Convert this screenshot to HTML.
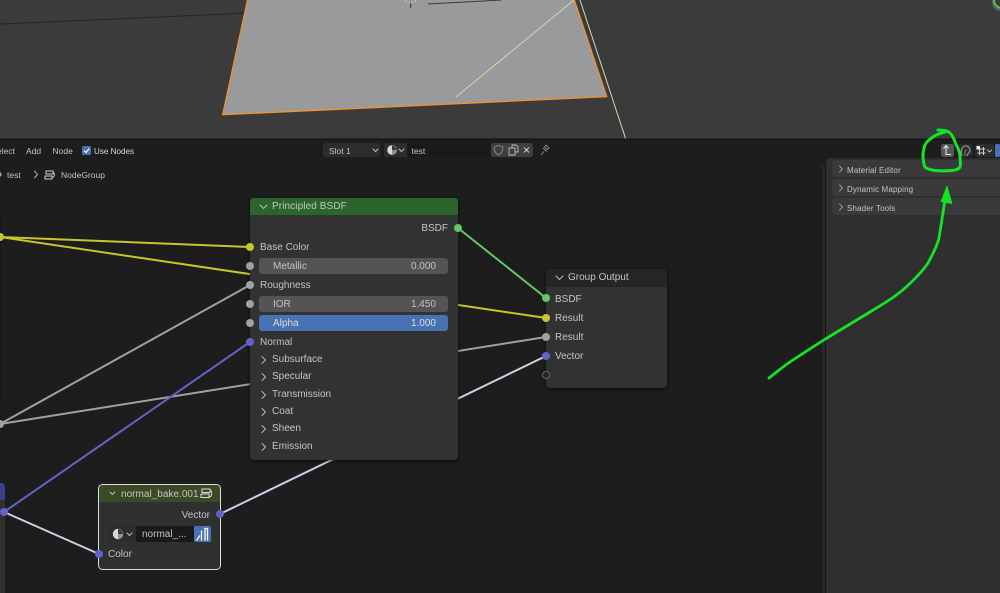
<!DOCTYPE html>
<html>
<head>
<meta charset="utf-8">
<style>
html,body{margin:0;padding:0;background:#1d1d1d;overflow:hidden}
svg{display:block;position:absolute;left:0;top:0;filter:blur(.35px)}
text{font-family:"Liberation Sans",sans-serif;font-size:10px;fill:#c4c4c4}
.w{fill:#dcdcdc}
.chev{fill:none;stroke:#bdbdbd;stroke-width:1;stroke-linecap:round;stroke-linejoin:round}
</style>
</head>
<body>
<svg width="1000" height="593" viewBox="0 0 1000 593" xmlns="http://www.w3.org/2000/svg">
<defs>
<filter id="sh" x="-10%" y="-10%" width="120%" height="120%"><feDropShadow dx="0" dy="1" stdDeviation="2" flood-color="#000" flood-opacity=".6"/></filter>
</defs>
<!-- viewport -->
<rect x="0" y="0" width="1000" height="139" fill="#3b3b3b"/>
<polygon points="247.7,-1 222.7,114.7 606.7,96.7 574,-1" fill="#989a9b" stroke="#f0932b" stroke-width="1.300"/>
<line x1="456" y1="97" x2="574" y2="0" stroke="#d6d8ae" stroke-width="1"/>
<line x1="580" y1="0" x2="625.7" y2="139" stroke="#d6d8ae" stroke-width="1"/>
<line x1="0" y1="24" x2="244" y2="13.300" stroke="#242424" stroke-width="1"/>
<line x1="427.7" y1="4" x2="501.7" y2="0" stroke="#3a3a3a" stroke-width="1"/>
<path d="M405 0a6 5 0 0 0 11 0" fill="none" stroke="#e8b4b4" stroke-width="1.100" stroke-dasharray="2 1.500"/>
<line x1="410.700" y1="3" x2="410.700" y2="8" stroke="#333" stroke-width="1"/>
<circle cx="1001" cy="2" r="8" fill="none" stroke="#3d6a9c" stroke-width="2"/>
<circle cx="1002" cy="0" r="8" fill="none" stroke="#7ab52a" stroke-width="2"/>

<!-- editor -->
<rect x="0" y="139" width="1000" height="454" fill="#1d1d1d"/>
<rect x="0" y="138.500" width="1000" height="1.500" fill="#141414"/>

<!-- header menus -->
<text x="15" y="154" text-anchor="end" style="font-size:8.500px">Select</text>
<text x="26" y="154" style="font-size:8.500px">Add</text>
<text x="52.500" y="154" style="font-size:8.500px">Node</text>
<rect x="82" y="146" width="9" height="9" rx="1.500" fill="#4772b3"/>
<path d="M84 150.500l2 2 3.200-4" fill="none" stroke="#fff" stroke-width="1.200"/>
<text x="94" y="154" style="font-size:8.100px" class="w">Use Nodes</text>

<rect x="323" y="143" width="57" height="14" rx="3" fill="#2d2d2d"/>
<text x="329" y="154" style="font-size:8.500px">Slot 1</text>
<path class="chev" d="M373 149l2.500 2.500 2.500-2.500"/>
<rect x="384" y="143" width="149" height="14" rx="3" fill="#2d2d2d"/>
<rect x="407" y="143" width="84" height="14" fill="#1a1a1a"/>
<rect x="491" y="143" width="42" height="14" rx="3" fill="#3f3f3f"/>
<circle cx="392" cy="150" r="4.800" fill="#d8d8d8"/>
<path d="M392 150V145.500a4.500 4.500 0 0 1 4.500 4.500z" fill="#3a3a3a"/>
<path d="M392 150h4.500a4.500 4.500 0 0 1-4.500 4.500z" fill="#8f8f8f"/>
<path class="chev" d="M399 149l2.500 2.500 2.500-2.500"/>
<text x="411.500" y="154" style="font-size:8.500px">test</text>
<path d="M494 147l4.500-1.500 4.500 1.500c0 4-1.500 6.500-4.500 8-3-1.500-4.500-4-4.500-8z" fill="none" stroke="#8f8f8f" stroke-width=".9"/>
<path d="M509 148h6v7h-6zM512 148v-3h4l2 2v5h-3" fill="none" stroke="#bbb" stroke-width=".9"/>
<path d="M524 147.500l5 5M529 147.500l-5 5" stroke="#ccc" stroke-width="1"/>
<path d="M541 155l3-3.500M543 148l3.500 3.500M546 145l3 3-2 1.500-2.500-2.500z" fill="none" stroke="#8c8c8c" stroke-width=".9"/>

<!-- right header -->
<rect x="941" y="144" width="13" height="13" rx="2.500" fill="#565656"/>
<path d="M943.500 148.500l2.500-3 2.500 3M946 146v8.500h5" fill="none" stroke="#e6e6e6" stroke-width="1.100"/>
<rect x="959" y="144" width="14" height="13" rx="3" fill="#2a2a2a"/>
<path d="M962 156c-1.500-4-.5-10 3.500-10s5 4 4 6-2 1-2.500 4" fill="none" stroke="#7c7c7c" stroke-width="1.600"/>
<path d="M965 156c-.5-3 0-6 1.500-6" fill="none" stroke="#7c7c7c" stroke-width="1"/>
<rect x="975" y="144" width="19" height="13" rx="2.500" fill="#2d2d2d"/>
<path d="M977.500 149h8M977.500 153h8M979.500 147v8M983.500 147v8" stroke="#ccc" stroke-width="1"/>
<rect x="976.500" y="146" width="3.500" height="3.500" fill="#eee"/>
<path class="chev" d="M987.500 150l2 2 2-2"/>
<rect x="995" y="144" width="5" height="13" rx="1.500" fill="#4772b3"/>

<!-- breadcrumbs -->
<circle cx="-1" cy="174.500" r="2.500" fill="#aaa"/>
<text x="7" y="178" style="font-size:8.500px">test</text>
<path class="chev" d="M34.500 171l3 3.500-3 3.500" style="stroke:#aaa"/>
<path d="M46 171h7v3h-7zM45 176h7v3h-7zM53 172.500c2 0 2 4.500-1 5" fill="none" stroke="#ccc" stroke-width="1"/>
<text x="61" y="178" style="font-size:8.500px">NodeGroup</text>

<!-- sidebar -->
<rect x="822" y="166" width="3" height="427" fill="#292929"/>
<rect x="825" y="158" width="1.500" height="435" fill="#161616"/>
<path d="M830 158H1000V593H826V162a4 4 0 0 1 4-4z" fill="#2f2f2f"/>
<rect x="832" y="160" width="170" height="17" rx="3" fill="#3a3a3a"/>
<rect x="832" y="179" width="170" height="17" rx="3" fill="#3a3a3a"/>
<rect x="832" y="198" width="170" height="17" rx="3" fill="#3a3a3a"/>
<path class="chev" d="M839.500 166l3 3-3 3" style="stroke:#999"/>
<path class="chev" d="M839.500 185l3 3-3 3" style="stroke:#999"/>
<path class="chev" d="M839.500 204l3 3-3 3" style="stroke:#999"/>
<text x="847" y="173" style="font-size:8px;letter-spacing:.15px">Material Editor</text>
<text x="847" y="192" style="font-size:8px;letter-spacing:.15px">Dynamic Mapping</text>
<text x="847" y="211" style="font-size:8px;letter-spacing:.15px">Shader Tools</text>

<!-- left clipped nodes -->
<rect x="-10" y="215" width="11" height="185" fill="#171717"/>
<rect x="-10" y="483" width="15" height="120" rx="4" fill="#303030"/>
<path d="M-10 483H1a4 4 0 0 1 4 4V500H-10z" fill="#3c3f8c"/>

<!-- links -->
<g fill="none" stroke-width="2">
<line x1="0" y1="237" x2="250" y2="247" stroke="#c7c729"/>
<line x1="0" y1="237" x2="546" y2="318" stroke="#c7c729"/>
<line x1="0" y1="424" x2="250" y2="285" stroke="#a1a1a1"/>
<line x1="0" y1="424" x2="546" y2="337" stroke="#a1a1a1"/>
<line x1="4" y1="512" x2="250" y2="342" stroke="#6363c7"/>
<line x1="4" y1="512" x2="99" y2="554" stroke="#cfcfe6"/>
<line x1="220" y1="514" x2="546" y2="356" stroke="#cfcfe6"/>
<line x1="458" y1="228" x2="546" y2="298" stroke="#63c763"/>
</g>

<!-- Principled BSDF -->
<g filter="url(#sh)">
<rect x="250" y="198" width="208" height="262" rx="4" fill="#303030"/>
</g>
<path d="M250 215V202a4 4 0 0 1 4-4H454a4 4 0 0 1 4 4V215z" fill="#2b652b"/>
<path class="chev" d="M260 205l3.500 3.500 3.500-3.500"/>
<text x="272" y="209" style="letter-spacing:.1px">Principled BSDF</text>
<text x="448" y="231" text-anchor="end">BSDF</text>
<text x="260" y="250">Base Color</text>
<rect x="259" y="258" width="189" height="16" rx="3" fill="#545454"/>
<text x="273" y="269">Metallic</text>
<text x="436" y="269" text-anchor="end">0.000</text>
<text x="260" y="288">Roughness</text>
<rect x="259" y="296" width="189" height="16" rx="3" fill="#545454"/>
<text x="273" y="307">IOR</text>
<text x="436" y="307" text-anchor="end">1.450</text>
<rect x="259" y="315" width="189" height="16" rx="3" fill="#4772b3"/>
<text x="273" y="326" class="w">Alpha</text>
<text x="436" y="326" text-anchor="end" class="w">1.000</text>
<text x="260" y="345">Normal</text>
<g class="chev" style="stroke:#bbb">
<path d="M262 356.500l3.500 3.500-3.500 3.500"/><path d="M262 373.500l3.500 3.500-3.500 3.500"/><path d="M262 391.500l3.500 3.500-3.500 3.500"/><path d="M262 408.500l3.500 3.500-3.500 3.500"/><path d="M262 425.500l3.500 3.500-3.500 3.500"/><path d="M262 443.500l3.500 3.500-3.500 3.500"/>
</g>
<text x="272" y="362">Subsurface</text>
<text x="272" y="379">Specular</text>
<text x="272" y="397">Transmission</text>
<text x="272" y="414">Coat</text>
<text x="272" y="431">Sheen</text>
<text x="272" y="449">Emission</text>

<!-- Group Output -->
<g filter="url(#sh)">
<rect x="546" y="269" width="121" height="119" rx="4" fill="#303030"/>
</g>
<path d="M546 287V273a4 4 0 0 1 4-4H663a4 4 0 0 1 4 4V287z" fill="#252525"/>
<path class="chev" d="M556 276l3.500 3.500 3.500-3.500"/>
<text x="568" y="280">Group Output</text>
<text x="555" y="302">BSDF</text>
<text x="555" y="321">Result</text>
<text x="555" y="340">Result</text>
<text x="555" y="359">Vector</text>

<!-- normal_bake -->
<rect x="98.500" y="484.500" width="122" height="85" rx="4" fill="#303030" stroke="#dcdcdc" stroke-width="1"/>
<path d="M99 502V489a4 4 0 0 1 4-4H216a4 4 0 0 1 4 4V502z" fill="#3b4a26"/>
<path class="chev" d="M110 492l2.500 2.500 2.500-2.500"/>
<text x="121" y="497" style="letter-spacing:.02px">normal_bake.001</text>
<path d="M202 489h8v3.500h-8zM201 494h8v3.500h-8zM210 490.500c2.500 0 2.500 6-1 6.500" fill="none" stroke="#ddd" stroke-width="1"/>
<text x="210" y="518" text-anchor="end">Vector</text>
<rect x="109" y="526" width="102" height="16" rx="3" fill="#2d2d2d"/>
<rect x="136" y="526" width="58" height="16" fill="#1a1a1a"/>
<rect x="194" y="526" width="17" height="16" rx="2" fill="#4772b3"/>
<circle cx="118" cy="534" r="5.200" fill="#d8d8d8"/>
<path d="M118 534V529a5 5 0 0 1 5 5z" fill="#3a3a3a"/>
<path d="M118 534h5a5 5 0 0 1-5 5z" fill="#8f8f8f"/>
<path class="chev" d="M127 533l2.500 2.500 2.500-2.500"/>
<text x="142" y="537">normal_...</text>
<path d="M196.500 540.500l3.500-5M201.500 540.500v-10M205 540.500v-12h2.500v12" fill="none" stroke="#fff" stroke-width="1.300"/>
<text x="108" y="557">Color</text>

<!-- sockets -->
<g>
<circle cx="0" cy="237" r="4" fill="#c7c729"/>
<circle cx="0" cy="424" r="4" fill="#a1a1a1"/>
<circle cx="4" cy="512" r="4" fill="#6363c7"/>
<circle cx="250" cy="247" r="4" fill="#c7c729"/>
<circle cx="250" cy="266" r="4" fill="#a1a1a1"/>
<circle cx="250" cy="285" r="4" fill="#a1a1a1"/>
<circle cx="250" cy="304" r="4" fill="#a1a1a1"/>
<circle cx="250" cy="323" r="4" fill="#a1a1a1"/>
<circle cx="250" cy="342" r="4" fill="#6363c7"/>
<circle cx="458" cy="228" r="4" fill="#63c763"/>
<circle cx="546" cy="298" r="4" fill="#63c763"/>
<circle cx="546" cy="318" r="4" fill="#c7c729"/>
<circle cx="546" cy="337" r="4" fill="#a1a1a1"/>
<circle cx="546" cy="356" r="4" fill="#6363c7"/>
<circle cx="220" cy="514" r="4" fill="#6363c7"/>
<circle cx="99" cy="554" r="4" fill="#6363c7"/>
</g>
<circle cx="546" cy="375" r="3.500" fill="#222" stroke="#6a6a6a" stroke-width="1"/>

<!-- green annotations -->
<path d="M769 378C778 371 785 365 793 360C805 352 816 345 827 338C842 329 855 321 870 312C883 304 895 297 905 288C915 279 922 272 928 263C933 254 937 246 939 238C941 226 943 213 945 200" fill="none" stroke="#14e428" stroke-width="2.800" stroke-linecap="round"/>
<polygon points="947,185 940.500,202 952.500,204" fill="#14e428"/>
<path d="M938 130C941 130 947 130 950 133C953 136 954 139 955 142C957 147 960 151 960 156C960 160 961 164 960 167C958 170 955 170 952 170.500C946 171 940 171 935 170.500C931 170 927 169 925 167C923 163 923 159 923 155C923 151 924 148 925 145C927 141 930 139 933 137C937 134 941 133 945 132" fill="none" stroke="#14e428" stroke-width="3" stroke-linecap="round"/>
</svg>
</body>
</html>
